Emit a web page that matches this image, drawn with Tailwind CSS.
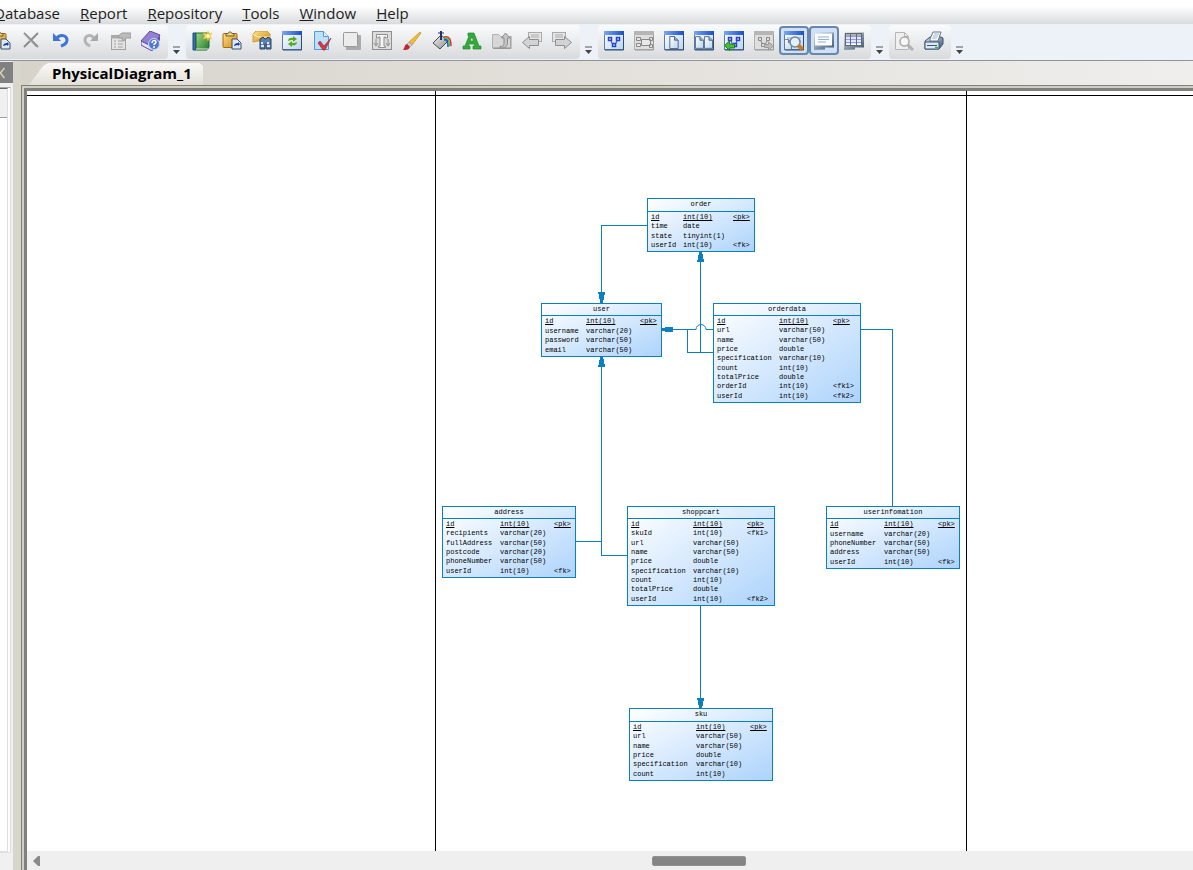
<!DOCTYPE html>
<html lang="en">
<head>
<meta charset="utf-8">
<title>PhysicalDiagram_1</title>
<script src="https://cdn.jsdelivr.net/npm/@tailwindcss/browser@4"></script>
</head>
<body class="h-screen flex flex-col overflow-hidden bg-[#f0f0f0] font-['Open_Sans','Noto_Sans',sans-serif] text-black">

<svg class="absolute size-0" aria-hidden="true">
  <defs>
    <linearGradient id="gBlue" x1="0" x2="1" y1="0" y2="1"><stop offset="0" stop-color="#fff"/><stop offset="1" stop-color="#b9d5ee"/></linearGradient>
    <linearGradient id="gBar" x1="0" x2="1"><stop offset="0" stop-color="#7aa7f5"/><stop offset="1" stop-color="#1d4fc4"/></linearGradient>
    <linearGradient id="gGray" x1="0" x2="1" y1="0" y2="1"><stop offset="0" stop-color="#f4f4f4"/><stop offset="1" stop-color="#8c8c8c"/></linearGradient>
    <linearGradient id="gGreen" x1="0" x2="1" y1="0" y2="1"><stop offset="0" stop-color="#a5d987"/><stop offset="1" stop-color="#1f7a2b"/></linearGradient>
    <linearGradient id="gGold" x1="0" x2="1" y1="0" y2="1"><stop offset="0" stop-color="#ffe28a"/><stop offset="1" stop-color="#d1860f"/></linearGradient>
    <linearGradient id="gSlate" x1="0" x2="1" y1="0" y2="1"><stop offset="0" stop-color="#d5e2f0"/><stop offset="1" stop-color="#3c536e"/></linearGradient>
    <symbol id="win" viewBox="0 0 20 20"><rect x="0.5" y="0.5" width="19" height="18" fill="url(#gBlue)" stroke="#5b7cab"/><rect x="0" y="0" width="20" height="4" fill="url(#gBar)"/><path d="M19.5 4v15H1" fill="none" stroke="#2f4a70"/></symbol>
    <symbol id="wingray" viewBox="0 0 20 20"><rect x="0.5" y="0.5" width="19" height="18" fill="#dedede" stroke="#b0b0b0"/><path d="M0 2h20" stroke="#b5b5b5" stroke-width="4"/><path d="M19.5 4v15H1" fill="none" stroke="#999"/></symbol>
    <symbol id="page" viewBox="0 0 10 14"><path d="M.5.5h5l4 4v9H.5z" fill="url(#gBlue)" stroke="#49627f"/><path d="M5.500 .5v4h4" fill="#9db5cc" stroke="#49627f"/></symbol>
    <symbol id="clip" viewBox="0 0 20 20"><rect x="1" y="2.500" width="14" height="14" rx="1" fill="url(#gGold)" stroke="#a56c14"/><path d="M4 5V2.500h2C6 .5 10 .5 10 2.500h2V5z" fill="#f4d27a" stroke="#6d5b35"/><path d="M10 8h5l4 4v6h-9z" fill="#dfe8f3" stroke="#38506f"/><path d="M12 15c0-2 2-3 4-3v-1l2 2-2 2v-1c-2 0-3 1-4 1" fill="#1c3f99"/></symbol>
  </defs>
</svg>

<nav class="h-6 shrink-0 flex items-center gap-5 -ml-1.5 bg-linear-to-b from-white from-25% to-[#d9dbdd] pt-0.5 text-[15px] leading-5 text-[#1d1d1d]" aria-label="Main menu">
  <button><u>D</u>atabase</button>
  <button><u>R</u>eport</button>
  <button><u>R</u>epository</button>
  <button><u>T</u>ools</button>
  <button><u>W</u>indow</button>
  <button><u>H</u>elp</button>
</nav>

<div class="h-[37px] shrink-0 flex items-stretch gap-[3px] border-b border-[#929398] bg-[#edf2f9] pt-px pb-px -ml-[14px]" role="toolbar" aria-label="Tools">
  <div class="flex shrink-0">
    <div class="flex items-center pr-0.5 pb-[3px] rounded-r bg-linear-to-b from-[#fafbfc] to-[#d9dadc]">
      <button class="w-[30px] h-[29px] grid place-items-center" aria-label="Paste"><svg class="size-5"><use href="#clip"/></svg></button>
      <button class="w-[30px] h-[29px] grid place-items-center" aria-label="Delete"><svg class="size-5" viewBox="0 0 20 20"><path d="M3 2l14 14M17 2L3 16" stroke="#8d8d8d" stroke-width="2" fill="none"/><path d="M3 3l12 13" stroke="#bbb" fill="none"/></svg></button>
      <button class="w-[30px] h-[29px] grid place-items-center" aria-label="Undo"><svg class="size-5" viewBox="0 0 20 20"><path d="M6 7c3-4 10-3 10 2 0 4-3 5-6 6" fill="none" stroke="#3c74d8" stroke-width="3"/><path d="M2 2v8h8z" fill="#3c74d8"/></svg></button>
      <button class="w-[30px] h-[29px] grid place-items-center" aria-label="Redo"><svg class="size-5" viewBox="0 0 20 20"><path d="M13 7C10 3 4 4 4 9c0 4 3 5 5 6" fill="none" stroke="#b4b4b4" stroke-width="3"/><path d="M17 2v8H9z" fill="#a9a9a9"/></svg></button>
      <button class="w-[30px] h-[29px] grid place-items-center" aria-label="Properties"><svg class="size-5" viewBox="0 0 20 20"><rect x=".5" y="4.500" width="14" height="14" fill="#e4e4e4" stroke="#a2a2a2"/><path d="M0 6h15" stroke="#aaa" stroke-width="3"/><path d="M3 10h2M3 13h2M3 16h2M7 10h5M7 13h5M7 16h5" stroke="#a2a2a2"/><path d="M7 5l4-3h9v5h-5l-2 3-2-1 1-2H8z" fill="#bcbcbc" stroke="#999"/></svg></button>
      <button class="w-[30px] h-[29px] grid place-items-center" aria-label="Help"><svg class="size-5" viewBox="0 0 20 20"><path d="M0 10L9 0l10 4-7 12z" fill="#9580d0" stroke="#5d4aa0"/><path d="M0 10v4l11 6 1-4z" fill="#e8e4f6" stroke="#5d4aa0"/><path d="M12 16l7-12v5l-8 11" fill="#6752ad"/><circle cx="13" cy="13" r="5.500" fill="#4f79d0" stroke="#cad9f6"/><path d="M11 12c0-3 4-3 4-1 0 2-2 1.500-2 3M13 15v2" fill="none" stroke="#fff" stroke-width="1.500"/></svg></button>
    </div>
    <button class="w-[15px] flex items-end justify-center pb-[5px]" aria-label="More edit buttons"><svg class="w-2 h-2" viewBox="0 0 8 8"><path d="M1 1h7" stroke="#555" /><path d="M1 4h7L4.500 8z" fill="#444"/></svg></button>
  </div>

  <div class="flex shrink-0">
    <div class="flex items-center pl-px pr-[3px] pb-[3px] rounded bg-linear-to-b from-[#fafbfc] to-[#d9dadc]">
      <button class="w-[30px] h-[29px] grid place-items-center" aria-label="New model"><svg class="size-5" viewBox="0 0 20 20"><path d="M1 2h3v17H1z" fill="#3571b8" stroke="#1e4a86"/><path d="M4 2h13v14l-2 3H4z" fill="url(#gGreen)" stroke="#1d6331"/><path d="M4 18h12" stroke="#dfe9df"/><path d="M16 0l1 3 3-1-2 3 2 3-3-1-1 3-1-3-4 1 2-3-2-3 4 1z" fill="#ffdd55" stroke="#efb52a" stroke-width=".5"/><circle cx="16" cy="5" r="1.500" fill="#fff8c8"/></svg></button>
      <button class="w-[30px] h-[29px] grid place-items-center" aria-label="Paste as shortcut"><svg class="size-5"><use href="#clip"/></svg></button>
      <button class="w-[30px] h-[29px] grid place-items-center" aria-label="Find objects"><svg class="size-5" viewBox="0 0 20 20"><path d="M1 3l3-3h11l3 3v7H6L1 11z" fill="url(#gGold)" stroke="#d19a3c"/><path d="M1 3l5 3h12" fill="none" stroke="#fff0bd"/><path d="M8 8l3-2 2 2h1l2-2 3 2v10h-5v-5h-1v5H8z" fill="#5b7fae" stroke="#263f66"/><path d="M9 15h3M15 15h3M9 12h2M15 12h2" stroke="#dce9f8" stroke-width="2"/></svg></button>
      <button class="w-[30px] h-[29px] grid place-items-center" aria-label="Refresh"><svg class="size-5" viewBox="0 0 20 20"><use href="#win"/><path d="M6 10c0-3 3-4 5-3V5l4 3-4 3V9c-2 0-3 0-5 1zM15 11c0 3-3 4-5 3v2l-4-3 4-3v2c2 0 3 0 5-1z" fill="#5ba91b"/></svg></button>
      <button class="w-[30px] h-[29px] grid place-items-center" aria-label="Check model"><svg class="size-5" viewBox="0 0 20 20"><path d="M2.500 .5h9l5 5v13h-14z" fill="#bfe0fa" stroke="#4d9be0"/><path d="M11.500 .5v5h5" fill="#e9f5ff" stroke="#4d9be0"/><path d="M8 10l4 5 7-8-6 12h-2l-5-7z" fill="#d33a3e" stroke="#9e2b3b" stroke-width=".7"/></svg></button>
      <button class="w-[30px] h-[29px] grid place-items-center" aria-label="Shadow"><svg class="size-5" viewBox="0 0 20 20"><rect x="4" y="4" width="15" height="15" rx="1" fill="#aaa"/><rect x="1.500" y="1.500" width="14" height="14" rx="1" fill="#ececec" stroke="#999"/></svg></button>
      <button class="w-[30px] h-[29px] grid place-items-center" aria-label="Text fit"><svg class="size-5" viewBox="0 0 20 20"><rect x=".5" y=".5" width="19" height="18" fill="#dcdcdc" stroke="#8f8f8f"/><path d="M4.500 7V3.500h11V7h-2V6H12v9h1.500v1.500h-7V15H8V6H6.500v1z" fill="#f5f5f5" stroke="#8f8f8f"/><path d="M4 8v6M2 12l2 3 2-3M16 8v6M14 12l2 3 2-3" fill="none" stroke="#8f8f8f"/></svg></button>
      <button class="w-[30px] h-[29px] grid place-items-center" aria-label="Format brush"><svg class="size-5" viewBox="0 0 20 20"><path d="M18 1l1 1-9 12-3-3z" fill="#f5bd32" stroke="#c98b1e" stroke-width=".7"/><path d="M7 11l3 3-2 2-3-3z" fill="#c9d0da" stroke="#888" stroke-width=".5"/><path d="M5 13l3 3c-1 3-4 3-7 3 2-2 1-5 4-6z" fill="#c5242b"/></svg></button>
      <button class="w-[30px] h-[29px] grid place-items-center" aria-label="Fill colour"><svg class="size-5" viewBox="0 0 20 20"><path d="M1 12l8-8 7 6-8 8z" fill="url(#gGray)" stroke="#4c4c4c"/><path d="M9 0v9" stroke="#26306f" stroke-width="2"/><path d="M6 2h6" stroke="#26306f"/><path d="M12 6c5-1 7 2 7 9" fill="none" stroke="#e32b28" stroke-width="1.500"/><path d="M12 7.500c4-1 5.500 2 5.500 8" fill="none" stroke="#25c93b" stroke-width="1.500"/><path d="M12 9c3-1 4 2 4 7" fill="none" stroke="#2747e0" stroke-width="1.500"/></svg></button>
      <button class="w-[30px] h-[29px] grid place-items-center" aria-label="Font"><svg class="size-5" viewBox="0 0 20 20"><path d="M8 2h4l5 13h2v3h-8v-3h2l-.7-2H7l-.7 2H8v3H1v-3h2l4-10H6V2zM8 10h3.500L10 5.500z" fill="#35a93b" stroke="#1c8a2a" stroke-width=".7" fill-rule="evenodd"/></svg></button>
      <button class="w-[30px] h-[29px] grid place-items-center" aria-label="Go up"><svg class="size-5" viewBox="0 0 20 20"><path d="M.5 3.500h6l2 2h10v11H.5z" fill="#d7d7d7" stroke="#b2b2b2"/><path d="M1 17.500h18V5" fill="none" stroke="#999"/><path d="M8 15.500c3 0 4-1 4-3V7H9.500l4-5L18 7h-2.500v5c0 4-3 5-7.500 5z" fill="#c5c5c5" stroke="#8c8c8c"/></svg></button>
      <button class="w-[30px] h-[29px] grid place-items-center" aria-label="Back"><svg class="size-5" viewBox="0 0 20 20"><rect x="6.500" y="1.500" width="13" height="9" fill="#e6e6e6" stroke="#aaa"/><path d="M9 4h8M9 6h8" stroke="#aaa"/><path d="M.5 11.500l7-6v3h9v6h-9v3z" fill="#d3d3d3" stroke="#8e8e8e"/></svg></button>
      <button class="w-[30px] h-[29px] grid place-items-center" aria-label="Forward"><svg class="size-5" viewBox="0 0 20 20"><rect x=".5" y="1.500" width="13" height="9" fill="#e6e6e6" stroke="#aaa"/><path d="M3 4h8M3 6h8" stroke="#aaa"/><path d="M19.500 11.500l-7-6v3h-9v6h9v3z" fill="#d3d3d3" stroke="#8e8e8e"/></svg></button>
    </div>
    <button class="w-[15px] flex items-end justify-center pb-[5px]" aria-label="More model buttons"><svg class="w-2 h-2" viewBox="0 0 8 8"><path d="M1 1h7" stroke="#555" /><path d="M1 4h7L4.500 8z" fill="#444"/></svg></button>
  </div>

  <div class="flex shrink-0">
    <div class="flex items-center pl-px pr-0.5 pb-[3px] rounded bg-linear-to-b from-[#fafbfc] to-[#d9dadc]">
      <button class="w-[30px] h-[29px] grid place-items-center" aria-label="Diagram"><svg class="size-5" viewBox="0 0 20 20"><use href="#win"/><path d="M6 8l3 6M14 8l-3 6" stroke="#2b42c8"/><path d="M4.500 6.500h3v3h-3zM12.500 6.500h3v3h-3zM8.500 12.500h3v3h-3z" fill="#cbd5ff" stroke="#2b42c8" stroke-width="1.500"/></svg></button>
      <button class="w-[30px] h-[29px] grid place-items-center" aria-label="Subdiagram"><svg class="size-5" viewBox="0 0 20 20"><use href="#wingray"/><path d="M2.500 6.500h4v3h-4zM7.500 8.500h9v6h-9zM2.500 12.500h4v3h-4zM15.500 6.500h3v3h-3zM15.500 13.500h3v3h-3z" fill="#e8e8e8" stroke="#888"/></svg></button>
      <button class="w-[30px] h-[29px] grid place-items-center" aria-label="Page view"><svg class="size-5" viewBox="0 0 20 20"><use href="#win"/><use href="#page" x="5" y="5" width="10" height="13"/></svg></button>
      <button class="w-[30px] h-[29px] grid place-items-center" aria-label="Two pages"><svg class="size-5" viewBox="0 0 20 20"><use href="#win"/><use href="#page" x="1" y="5" width="9" height="13"/><use href="#page" x="10" y="5" width="9" height="13"/></svg></button>
      <button class="w-[30px] h-[29px] grid place-items-center" aria-label="Previous diagram"><svg class="size-5" viewBox="0 0 20 20"><use href="#win"/><path d="M6 8l3 6M14 8l-3 6" stroke="#2b42c8"/><path d="M4.500 6.500h3v3h-3zM12.500 6.500h3v3h-3zM9.500 12.500h3v3h-3z" fill="#cbd5ff" stroke="#2b42c8" stroke-width="1.500"/><path d="M.5 14.500l5-4.500v3h5v4h-5v2.500z" fill="#4abb32" stroke="#1d7d22"/></svg></button>
      <button class="w-[30px] h-[29px] grid place-items-center" aria-label="Next diagram"><svg class="size-5" viewBox="0 0 20 20"><use href="#wingray"/><path d="M6 8l3 6M14 8l-3 6" stroke="#888"/><path d="M4.500 6.500h3v3h-3zM12.500 6.500h3v3h-3zM7.500 12.500h3v3h-3z" fill="#e0e0e0" stroke="#888"/><path d="M19.500 15l-5-4v2.500h-4v3h4V19z" fill="#bbb" stroke="#999"/></svg></button>
      <button class="w-[30px] h-[29px] grid place-items-center rounded-sm border-2 border-[#6887ad] bg-[#cfe0f7]" aria-label="Overview" aria-pressed="true"><svg class="size-5" viewBox="0 0 20 20"><use href="#win"/><path d="M3 7h14M3 10h14" stroke="#8ba8dc"/><use href="#page" x="0" y="8" width="8" height="11"/><circle cx="11" cy="11" r="5" fill="#e4f0fa" stroke="#73879c" stroke-width="1.500"/><path d="M14.500 14.500l4 4" stroke="#cf7a22" stroke-width="4"/></svg></button>
      <button class="w-[30px] h-[29px] grid place-items-center rounded-sm border-2 border-[#6887ad] bg-[#cfe0f7]" aria-label="Output" aria-pressed="true"><svg class="size-5" viewBox="0 0 20 20"><path d="M0 1.500h20v15h-9v2L0 19v-3z" fill="url(#gSlate)"/><path d="M1 2.500h17v12H1z" fill="#fafcff"/><path d="M4 6h11M4 8.500h11M4 11h8" stroke="#94b1cf"/></svg></button>
      <button class="w-[30px] h-[29px] grid place-items-center" aria-label="Result list"><svg class="size-5" viewBox="0 0 20 20"><path d="M0 1.500h20v15h-9v2L0 19v-3z" fill="url(#gSlate)"/><rect x="1.500" y="2.500" width="16" height="12" fill="#fff" stroke="#60656e"/><path d="M2 5.500h15M2 8.500h15M2 11.500h15" stroke="#8d9bf0" stroke-width="1.500"/><path d="M6.500 2v12M12.500 2v12M2 4h15" stroke="#6b6b6b"/></svg></button>
    </div>
    <button class="w-[15px] flex items-end justify-center pb-[5px]" aria-label="More view buttons"><svg class="w-2 h-2" viewBox="0 0 8 8"><path d="M1 1h7" stroke="#555" /><path d="M1 4h7L4.500 8z" fill="#444"/></svg></button>
  </div>

  <div class="flex shrink-0">
    <div class="flex items-center pr-0.5 pb-[3px] rounded bg-linear-to-b from-[#fafbfc] to-[#d9dadc]">
      <button class="w-[30px] h-[29px] grid place-items-center" aria-label="Print preview"><svg class="size-5" viewBox="0 0 20 20"><path d="M1.500 1.500h9l4 4v13h-13z" fill="#efefef" stroke="#b5b5b5"/><path d="M10.500 1.500v4h4" fill="none" stroke="#b5b5b5"/><circle cx="10.500" cy="10.500" r="4.500" fill="#f7f7f7" stroke="#aaa" stroke-width="1.500"/><path d="M14 14l5 5" stroke="#b0b0b0" stroke-width="3"/></svg></button>
      <button class="w-[30px] h-[29px] grid place-items-center" aria-label="Print"><svg class="size-5" viewBox="0 0 20 20"><path d="M1 10l5-4h11l2 1v6l-4 5H1z" fill="url(#gSlate)" stroke="#3e5674"/><path d="M6 8l3-7h8l-3 9H6z" fill="#fff" stroke="#5f7895"/><path d="M10 3h5M9 5h5M8 7h5" stroke="#9fb3c8"/><path d="M1 11h14v7H1z" fill="#dce8f5" stroke="#3e5674"/><path d="M3 14.500h10" stroke="#3e5674"/><path d="M11 16.500h3" stroke="#40b040" stroke-width="1.500"/></svg></button>
    </div>
    <button class="w-[15px] flex items-end justify-center pb-[5px]" aria-label="More print buttons"><svg class="w-2 h-2" viewBox="0 0 8 8"><path d="M1 1h7" stroke="#555" /><path d="M1 4h7L4.500 8z" fill="#444"/></svg></button>
  </div>
</div>

<div class="flex flex-1 min-h-0">
  <aside class="w-[13px] shrink-0 flex flex-col bg-[#f0f0f0]" aria-label="Browser">
    <button class="mt-px h-[21px] w-full bg-[#808080]" aria-label="Close browser"><svg class="w-[5px] h-3" viewBox="0 0 5 12"><path d="M0 6.500L4.500 1M0 5.500L4.500 11" stroke="#d8d4b4" stroke-width="1.500" fill="none"/></svg></button>
    <div class="mt-[4px] mb-[17px] mr-0.5 flex-1 flex flex-col border-y border-r border-t-[#a8a8a8] border-[#dedede] bg-white pr-0.5">
      <div class="flex-1 flex flex-col border-y border-r border-t-[#696969] border-[#dedede]">
        <div class="h-[29px] border-b border-[#a0a0a0] bg-[#f0f0f0]"></div>
      </div>
    </div>
  </aside>
  <div class="w-2 shrink-0 bg-[#d8d5cd]"></div>

  <main class="flex-1 min-w-0 flex flex-col">
    <div class="h-[24px] shrink-0 flex items-end bg-linear-to-r from-[#d7d3cb] to-[#efeeec]" role="tablist">
      <button class="ml-2 h-[22px] w-[174px] pl-[23px] text-left text-[15px] leading-[18px] pb-[3px] font-bold whitespace-nowrap bg-linear-to-b from-[#faf9f7] to-[#e3e0d8] [clip-path:polygon(0_100%,14px_3px,19px_0,98%_0,100%_3px,100%_100%)]" role="tab" aria-selected="true">PhysicalDiagram_1</button>
    </div>
    <div class="flex-1 min-h-0 flex border-t border-l border-[#808080]">
      <div class="flex-1 min-w-0 flex border-t-2 border-l-2 border-[#d2cfbe]">
        <div class="flex-1 min-w-0 flex flex-col border-t-[3px] border-l-[3px] border-[#808080]">
          <div id="canvas" class="relative flex-1 min-h-0 overflow-hidden bg-white">
            <svg class="absolute inset-0 size-full" fill="none" shape-rendering="crispEdges">
              <g stroke="#000"><path d="M0 4.500H4000M408.500 0V4000M939.500 0V4000"/></g>
              <g stroke="#0a80be">
                <path d="M620 134.500H574.500V212"/>
                <path d="M686 261.500H660.500V238.500M673.500 261V161"/>
                <path d="M635 238.500H669M679 238.500H686"/>
                <path d="M669 238.500a5 5 0 0 1 10 0" shape-rendering="auto"/>
                <path d="M834 238.500H865.500V415"/>
                <path d="M600 464.500H574.500V266M549 450.500H574"/>
                <path d="M673.500 515V617"/>
              </g>
              <g fill="#0a80be">
                <path d="M571 201h7v2l-1 1v4l-1 1v3h-3v-3l-1-1v-4l-1-1z"/>
                <path d="M670 171h7v-2l-1-1v-4l-1-1v-2h-3v2l-1 1v4l-1 1z"/>
                <path d="M635 237h3v-1h8v5h-8v-1h-3z"/>
                <path d="M571 276h7v-2l-1-1v-4l-1-1v-2h-3v2l-1 1v4l-1 1z"/>
                <path d="M670 607h7v2l-1 1v4l-1 1v2h-3v-2l-1-1v-4l-1-1z"/>
              </g>
            </svg>
          </div>
          <div class="h-[19px] shrink-0 flex items-center bg-[#efefef] pl-1.5 pr-0">
            <button class="shrink-0" aria-label="Scroll left"><svg class="w-[7px] h-[10px]" viewBox="0 0 7 10"><path d="M0 5l5-5h2v10H5z" fill="#8b8b8b"/></svg></button>
            <div class="flex-1 flex justify-start pl-0.5" role="scrollbar" aria-controls="canvas" aria-orientation="horizontal" aria-valuenow="53">
              <div class="ml-[53%] w-[94px] h-2.5 rounded-xs border border-[#929292] bg-[#858585]"></div>
            </div>
          </div>
        </div>
      </div>
    </div>
  </main>
</div>

<script>
// x/y/w/h place the entity on the canvas, head is the title height, cols are the first two column widths.
const entities = [
  { name: 'order', x: 620, y: 107, w: 108, h: 54, head: 13, cols: [32, 50], rows: ['id|int(10)|<pk>', 'time|date|', 'state|tinyint(1)|', 'userId|int(10)|<fk>'] },
  { name: 'user', x: 514, y: 212, w: 121, h: 54, head: 12, cols: [41, 54], rows: ['id|int(10)|<pk>', 'username|varchar(20)|', 'password|varchar(50)|', 'email|varchar(50)|'] },
  { name: 'orderdata', x: 686, y: 212, w: 148, h: 100, head: 12, cols: [62, 54], rows: ['id|int(10)|<pk>', 'url|varchar(50)|', 'name|varchar(50)|', 'price|double|', 'specification|varchar(10)|', 'count|int(10)|', 'totalPrice|double|', 'orderId|int(10)|<fk1>', 'userId|int(10)|<fk2>'] },
  { name: 'address', x: 415, y: 415, w: 134, h: 72, head: 12, cols: [54, 54], rows: ['id|int(10)|<pk>', 'recipients|varchar(20)|', 'fullAddress|varchar(50)|', 'postcode|varchar(20)|', 'phoneNumber|varchar(50)|', 'userId|int(10)|<fk>'] },
  { name: 'shoppcart', x: 600, y: 415, w: 148, h: 100, head: 12, cols: [62, 54], rows: ['id|int(10)|<pk>', 'skuId|int(10)|<fk1>', 'url|varchar(50)|', 'name|varchar(50)|', 'price|double|', 'specification|varchar(10)|', 'count|int(10)|', 'totalPrice|double|', 'userId|int(10)|<fk2>'] },
  { name: 'userinfomation', x: 799, y: 415, w: 134, h: 63, head: 12, cols: [54, 54], rows: ['id|int(10)|<pk>', 'username|varchar(20)|', 'phoneNumber|varchar(50)|', 'address|varchar(50)|', 'userId|int(10)|<fk>'] },
  { name: 'sku', x: 602, y: 617, w: 144, h: 73, head: 13, cols: [63, 54], rows: ['id|int(10)|<pk>', 'url|varchar(50)|', 'name|varchar(50)|', 'price|double|', 'specification|varchar(10)|', 'count|int(10)|'] },
];
const esc = s => s.replace('<', '&lt;').replace('>', '&gt;');
const canvas = document.getElementById('canvas');
for (const e of entities) {
  const rows = e.rows.map((r, i) => {
    const cls = i === 0 ? 'p-0 underline underline-offset-1' : 'p-0';
    return '<tr>' + r.split('|').map(c => `<td class="${cls}">${esc(c)}</td>`).join('') + '</tr>';
  }).join('');
  canvas.insertAdjacentHTML('beforeend', `
    <section class="absolute flex flex-col border border-[#0a80be] bg-linear-to-br from-white to-[#add3fb] font-['Liberation_Mono',monospace] text-[7px] leading-[9px] text-black" style="left:${e.x}px;top:${e.y}px;width:${e.w}px;height:${e.h}px">
      <h2 class="shrink-0 border-b border-[#0a80be] text-center leading-[11px]" style="height:${e.head}px">${e.name}</h2>
      <div class="flex-1 pt-px pb-px pl-[3px]">
        <table class="h-full w-full table-fixed border-collapse whitespace-nowrap">
          <colgroup><col style="width:${e.cols[0]}px"><col style="width:${e.cols[1]}px"><col></colgroup>
          <tbody>${rows}</tbody>
        </table>
      </div>
    </section>`);
}
</script>
</body>
</html>
